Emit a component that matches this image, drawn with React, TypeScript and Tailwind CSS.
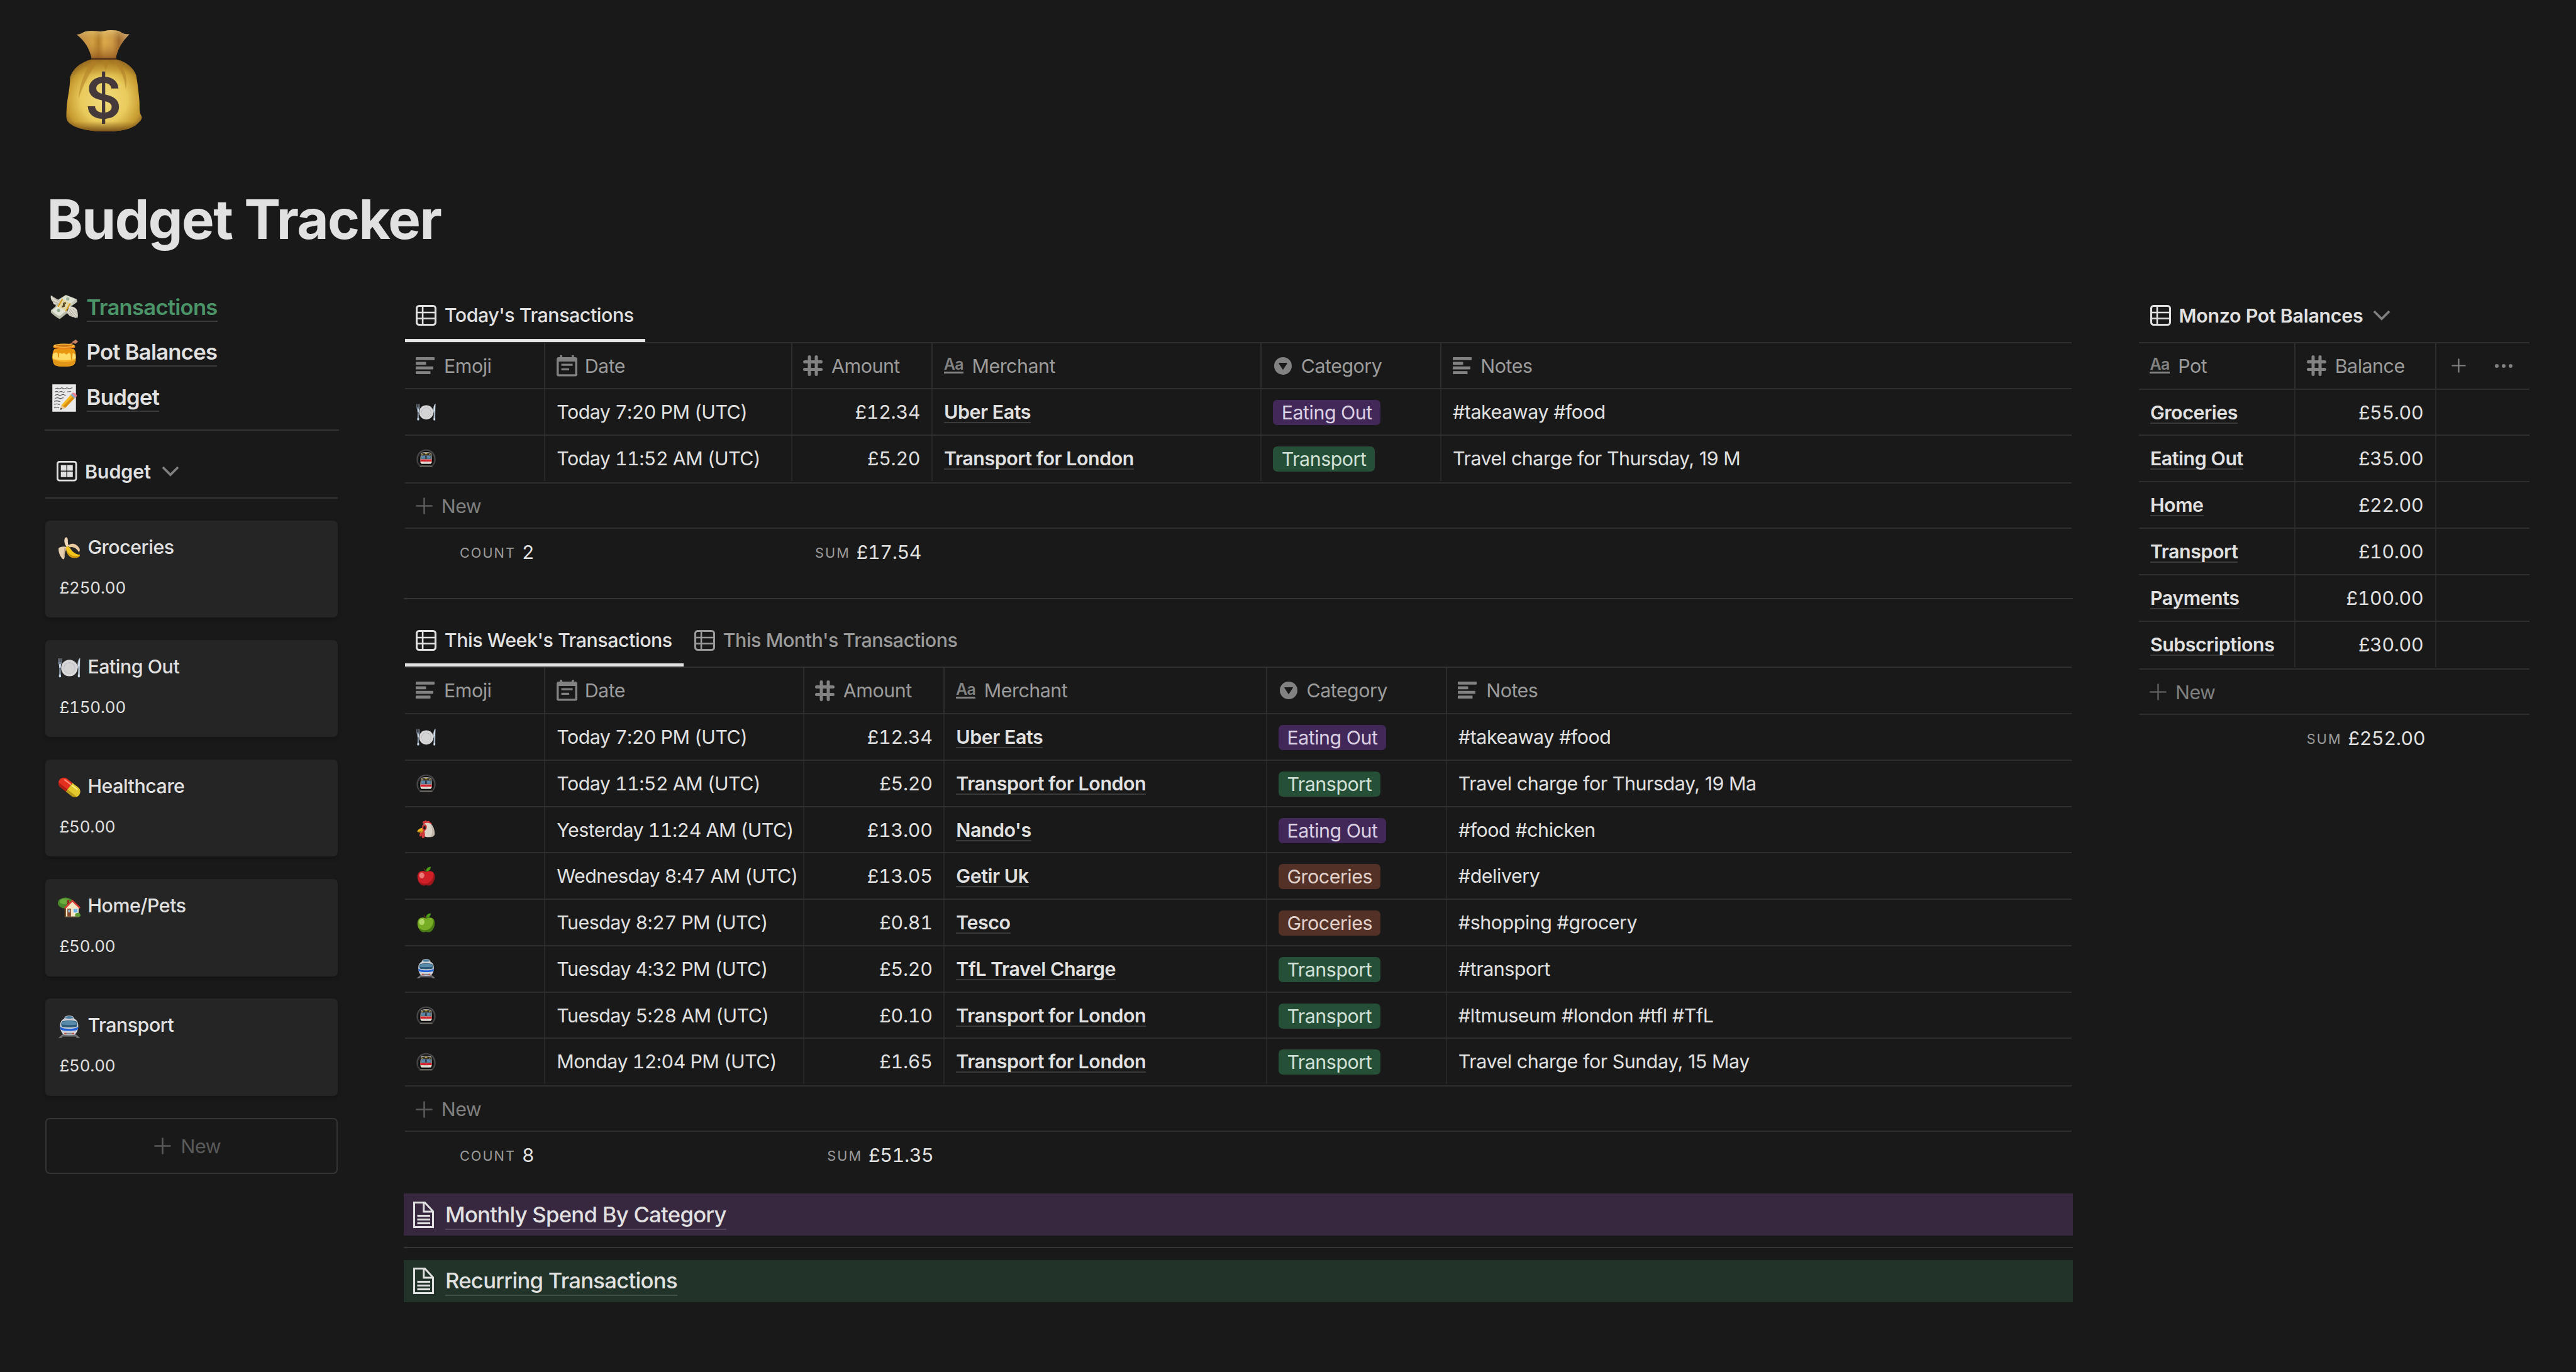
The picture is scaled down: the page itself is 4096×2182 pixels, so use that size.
import type { ReactNode } from "react";

/* ---------- Emoji drawings ---------- */

function MoneyBag() {
  return (
    <svg viewBox="0 0 245 326" className="block h-[161px] w-[121px]">
      <defs>
        <radialGradient id="bagBody" cx="0.5" cy="0.56" r="0.62">
          <stop offset="0" stopColor="#f3dc7c" />
          <stop offset="0.5" stopColor="#e9ca5c" />
          <stop offset="0.8" stopColor="#c69a30" />
          <stop offset="1" stopColor="#7c5520" />
        </radialGradient>
        <linearGradient id="bagShade" x1="0" y1="0" x2="0" y2="1">
          <stop offset="0" stopColor="#a0701f" stopOpacity="0.7" />
          <stop offset="0.22" stopColor="#a0701f" stopOpacity="0" />
          <stop offset="0.86" stopColor="#7a5218" stopOpacity="0" />
          <stop offset="1" stopColor="#6d4616" stopOpacity="0.85" />
        </linearGradient>
        <linearGradient id="bagNeck" x1="0" y1="0" x2="1" y2="0">
          <stop offset="0" stopColor="#b98748" />
          <stop offset="0.3" stopColor="#d3a042" />
          <stop offset="0.42" stopColor="#b4802c" />
          <stop offset="0.52" stopColor="#dcab4c" />
          <stop offset="0.68" stopColor="#cf9a45" />
          <stop offset="0.8" stopColor="#9f6a2c" />
          <stop offset="1" stopColor="#c8a070" />
        </linearGradient>
        <linearGradient id="bagNeckShade" x1="0" y1="0" x2="0" y2="1">
          <stop offset="0" stopColor="#e8d08a" stopOpacity="0.6" />
          <stop offset="0.4" stopColor="#c08a3a" stopOpacity="0" />
          <stop offset="1" stopColor="#8a4f1c" stopOpacity="0.8" />
        </linearGradient>
      </defs>
      <path d="M82 94C45 104 20 126 13 152C13 190 4 216 2 250C1 268-1 284 5 293C20 314 70 326 125 326C180 326 215 318 233 298C243 290 246 283 243 277C234 262 238 250 236 226C233 190 230 172 226 146C218 122 196 102 162 94Z" fill="url(#bagBody)" />
      <path d="M82 94C45 104 20 126 13 152C13 190 4 216 2 250C1 268-1 284 5 293C20 314 70 326 125 326C180 326 215 318 233 298C243 290 246 283 243 277C234 262 238 250 236 226C233 190 230 172 226 146C218 122 196 102 162 94Z" fill="url(#bagShade)" />
      <path d="M84 98C62 130 44 170 40 220C54 180 72 140 104 100ZM116 98L128 130L140 98ZM152 98C180 130 190 160 192 190C200 160 190 120 164 98Z" fill="#b07d26" opacity="0.55" />
      <path d="M34 14C48 14 54 6 64 4C84 0 104 6 124 3C140-2 164 0 173 4C182 12 194 14 204 13C182 36 166 58 160 92H83C76 58 58 32 34 14Z" fill="url(#bagNeck)" />
      <path d="M34 14C48 14 54 6 64 4C84 0 104 6 124 3C140-2 164 0 173 4C182 12 194 14 204 13C182 36 166 58 160 92H83C76 58 58 32 34 14Z" fill="url(#bagNeckShade)" />
      <path d="M82 92H161" stroke="#4b2f17" strokeWidth="4" />
      <text x="120" y="284" textAnchor="middle" fontFamily="Inter, sans-serif" fontWeight="600" fontSize="180" fill="#46393c">
        $
      </text>
    </svg>
  );
}

type EmojiName =
  | "wings" | "honey" | "memo" | "plate" | "metro" | "chicken" | "apple"
  | "greenApple" | "train" | "banana" | "pill" | "house";

const APPLE_BODY = "M50 28C40 22 22 20 12 32C0 48 6 76 22 92C30 100 40 98 50 96C60 98 70 100 78 92C94 76 100 48 88 32C78 20 60 22 50 28Z";

const EMOJI: Record<EmojiName, ReactNode> = {
  wings: (
    <>
      <path d="M48 32L2 4C0 14 4 24 10 28C8 32 14 38 18 38C20 44 28 48 34 46Z" fill="#d8d4c8" />
      <path d="M4 6L44 36M8 24L38 38M16 36L36 42" stroke="#9d998c" strokeWidth="2" fill="none" />
      <path d="M28 20L56 2C68 6 82 12 96 18L97 28L72 46C58 42 42 34 28 26Z" fill="#c6cab8" />
      <path d="M32 20L57 5C68 8 80 13 91 19L70 37C58 34 44 28 32 20Z" fill="#dfe2d2" />
      <circle cx="63" cy="17" r="6" fill="#9fb49a" />
      <path d="M2 58L30 34L62 58L64 66L34 90C22 84 10 74 2 66Z" fill="#b7bba8" />
      <path d="M6 59L30 39L58 59L34 79C24 75 14 68 6 59Z" fill="#e2e4d5" />
      <circle cx="30" cy="58" r="6" fill="#8fa88b" />
      <path d="M42 16L74 34L58 62L26 44Z" fill="#e2d7a0" />
      <path d="M42 16L46 18L30 46L26 44ZM70 32L74 34L58 62L54 60Z" fill="#d99c1c" />
      <path d="M56 34C50 28 44 34 48 38C54 42 50 48 42 42M56 30L42 47" stroke="#4b401f" strokeWidth="3.5" fill="none" />
      <path d="M68 44C80 42 96 48 98 62C100 72 100 82 98 86C94 84 92 84 90 86C86 82 82 84 80 82C76 80 70 80 66 74C62 70 60 68 62 62Z" fill="#dcd8cc" />
      <path d="M72 54L96 84M68 60L86 82M66 66L78 80M82 52L97 72" stroke="#9d998c" strokeWidth="2" />
    </>
  ),
  honey: (
    <>
      <path d="M66 20L88 8" stroke="#b06a48" strokeWidth="5" strokeLinecap="round" />
      <path d="M82 8L92 2L98 8L90 14Z" fill="#c98262" stroke="#c98262" strokeWidth="3" />
      <path d="M16 34C4 46 6 82 16 92C26 100 74 100 84 92C94 82 96 46 84 34Z" fill="#f9b62d" />
      <path d="M16 34C4 46 6 82 16 92C26 100 74 100 84 92C90 88 92 80 93 72C70 84 30 84 8 70Z" fill="#d98b12" opacity="0.75" />
      <path d="M10 46C30 52 70 52 90 46L92 68C70 76 30 76 8 68Z" fill="#ffdb68" />
      <path d="M10 50C10 40 16 34 16 34H84C89 38 91 44 91 50C88 56 84 50 82 47C79 52 81 74 77 74C72 73 77 54 70 47C64 44 63 55 58 54C53 52 52 46 46 49C42 56 38 48 34 46C30 48 34 66 30 66C26 65 29 50 24 46C18 44 14 54 10 50Z" fill="#e8960f" />
      <ellipse cx="50" cy="26" rx="40" ry="10" fill="#e8861a" />
      <ellipse cx="50" cy="22" rx="38" ry="7" fill="#ffc247" />
      <ellipse cx="50" cy="22" rx="30" ry="4.500" fill="#c97412" />
    </>
  ),
  memo: (
    <>
      <path d="M8 1H92V99H8Z" fill="#e9e9ea" />
      <path d="M8 1H92V99H8Z" fill="none" stroke="#c6c6c8" strokeWidth="2" />
      <path d="M18 16L26 14L32 17L42 13L50 17L60 13L68 16L80 13M16 28L24 26L30 29L40 26L48 30L52 27M60 28L74 26M16 40L26 37L34 41L46 37L56 41M16 51L26 49L36 52L48 49M14 62L24 60L36 63M14 73L24 71L34 74M14 85L24 83L32 86" stroke="#4e4e52" strokeWidth="2.500" fill="none" />
      <path d="M36 92L40 76L76 36L90 48L54 86Z" fill="#f6b91c" />
      <path d="M46 80L84 42L90 48L54 86Z" fill="#d98d10" />
      <path d="M36 93L40 76L54 86Z" fill="#e8c79a" />
      <path d="M36 93L38 85L44 89Z" fill="#333" />
      <path d="M73 39L79 33L93 45L87 52Z" fill="#8fa9c4" />
      <path d="M78 33C84 26 100 38 94 46L92 47Z" fill="#ee7f8e" />
    </>
  ),
  plate: (
    <>
      <path d="M1 8V26C1 34 5 36 7 38L5 88C5 94 14 94 14 88L12 38C14 36 18 34 18 26V8H15V26H13V8H11V26H8V8H6V26H4V8Z" fill="#7d8c9c" />
      <path d="M5 34H14L13 50H6ZM5 80H14V91H5Z" fill="#c4d6e8" />
      <path d="M98 6C90 10 86 28 86 50L90 54L88 88C88 94 97 94 97 88Z" fill="#a4b3c0" />
      <path d="M98 8C92 14 89 30 89 46L96 44ZM89 80H97V91H89Z" fill="#d0dde8" />
      <circle cx="51" cy="51" r="36.500" fill="#d9d9da" />
      <circle cx="51" cy="51" r="26" fill="#b9bcc2" />
      <circle cx="51" cy="52" r="23.500" fill="#d4d4d5" />
    </>
  ),
  metro: (
    <>
      <path d="M50 6C22 6 1 28 1 56C1 72 8 86 20 94H80C92 86 99 72 99 56C99 28 78 6 50 6Z" fill="#48484a" />
      <path d="M50 12C26 12 8 32 8 58C8 72 14 84 24 92H76C86 84 92 72 92 58C92 32 74 12 50 12Z" fill="#1b1b1c" />
      <path d="M50 16C32 16 16 32 16 58C16 70 20 80 28 90H72C80 80 84 70 84 58C84 32 68 16 50 16Z" fill="#070707" />
      <path d="M22 88H78L84 94H16Z" fill="#77736d" />
      <path d="M24 24C34 19 66 19 76 24C79 42 80 62 79 72L74 80H26L21 72C20 62 21 42 24 24Z" fill="#d9d7cf" />
      <path d="M27 26C36 22 64 22 73 26L75 36H25Z" fill="#37332a" />
      <path d="M44 25H56V30H44ZM28 30H34V34H28ZM66 30H72V34H66Z" fill="#c9b23c" />
      <path d="M26 36H74L76 56H24Z" fill="#2b3c4c" />
      <path d="M27 38H45V54H26ZM55 38H73L74 54H55Z" fill="#5c87a8" />
      <path d="M21 57H79V68H21Z" fill="#d5202c" />
      <path d="M23 69H36V73H23ZM64 69H77V73H64Z" fill="#f2ecd2" />
      <path d="M50 36V70" stroke="#8b8b8b" strokeWidth="2" />
    </>
  ),
  chicken: (
    <>
      <path d="M34 18C28 12 34 4 40 8C44 0 54 2 54 8C62 2 70 6 68 12C78 12 80 20 78 26L60 30Z" fill="#d6383a" />
      <path d="M30 34C34 18 56 12 70 18C86 26 92 48 94 66C96 82 84 88 66 88C48 90 38 84 36 70Z" fill="#dcd5ca" />
      <path d="M72 20C88 30 92 48 94 66C96 82 84 88 66 88C84 78 86 52 72 20Z" fill="#b6aa9c" opacity="0.7" />
      <path d="M30 32C36 18 54 20 54 36C54 50 42 54 42 60C46 72 46 92 36 94C26 94 28 84 28 78C24 88 14 88 16 76L24 58Z" fill="#cf3a3a" />
      <path d="M4 60C8 48 20 42 30 42L34 60C26 68 14 64 4 60Z" fill="#eab41a" />
      <path d="M4 60C14 58 24 58 33 56L34 61C26 68 14 66 4 60Z" fill="#c18a10" />
      <ellipse cx="42" cy="40" rx="6" ry="9" fill="#1e1a1c" />
    </>
  ),
  apple: (
    <>
      <path d="M50 30C48 22 44 16 38 12" stroke="#6b3b1c" strokeWidth="4" fill="none" />
      <path d={APPLE_BODY} fill="#cf2028" />
      <path d="M50 96C60 98 70 100 78 92C94 76 100 48 88 32C90 60 74 84 50 88C36 90 24 86 14 76C16 82 18 88 22 92C30 100 40 98 50 96Z" fill="#8f1219" opacity="0.7" />
      <ellipse cx="28" cy="46" rx="13" ry="15" fill="#f39a90" opacity="0.75" />
      <path d="M50 26C48 12 60 2 74 2C74 16 64 26 50 26Z" fill="#4b9c14" />
    </>
  ),
  greenApple: (
    <>
      <path d="M50 30C48 22 44 16 38 12" stroke="#6b3b1c" strokeWidth="4" fill="none" />
      <path d={APPLE_BODY} fill="#76ad24" />
      <path d="M50 96C60 98 70 100 78 92C94 76 100 48 88 32C90 60 74 84 50 88C36 90 24 86 14 76C16 82 18 88 22 92C30 100 40 98 50 96Z" fill="#3f6f12" opacity="0.8" />
      <ellipse cx="28" cy="46" rx="14" ry="16" fill="#c0e276" opacity="0.8" />
      <path d="M50 26C48 12 60 2 74 2C74 16 64 26 50 26Z" fill="#4b9c14" />
    </>
  ),
  train: (
    <>
      <path d="M22 82H78L98 99H84L78 94H22L16 99H2Z" fill="#77777b" />
      <path d="M18 90H82V94H18Z" fill="#4c4c50" />
      <path d="M28 14C30 4 38 1 50 1C62 1 70 4 72 14C84 20 90 30 90 46C90 66 82 80 74 84C62 88 38 88 26 84C18 80 10 66 10 46C10 30 16 20 28 14Z" fill="#cfd2d8" />
      <path d="M31 12C33 5 39 3 50 3C61 3 67 5 69 12C60 15 40 15 31 12Z" fill="#4d7fa0" />
      <path d="M20 26C34 21 66 21 80 26C87 32 86 44 82 50C70 54 30 54 18 50C14 44 13 32 20 26Z" fill="#2d5b78" />
      <path d="M21 28C34 24 66 24 79 28C82 32 83 36 82 40C70 43 30 43 18 40C17 36 18 32 21 28Z" fill="#568aa8" />
      <path d="M10 50C20 57 34 59 50 59C66 59 80 57 90 50C90 55 88 60 86 63C76 67 64 68 50 68C36 68 24 67 14 63C12 60 10 55 10 50Z" fill="#1f5fd8" />
      <path d="M32 77H68V84H32Z" fill="#85878d" />
      <path d="M28 77H37V82H28ZM63 77H72V82H63Z" fill="#d0442e" />
    </>
  ),
  banana: (
    <>
      <path d="M40 44C28 34 26 12 32 4C38-2 44 4 44 14C44 26 44 34 50 40Z" fill="#efd9b8" />
      <path d="M46 38C58 24 84 28 96 52C98 60 96 66 92 66C84 52 68 40 52 46Z" fill="#e9c9a0" />
      <path d="M40 44C24 40 8 44 3 50C2 70 12 88 22 98C28 100 30 92 30 84C28 70 32 60 40 52Z" fill="#e6cfae" />
      <path d="M28 48C30 62 22 78 26 92C32 84 28 66 40 52Z" fill="#c7a888" />
      <path d="M36 46C42 38 50 42 56 52C66 68 82 78 98 78C98 88 84 94 66 92C46 88 36 68 36 46Z" fill="#f2c51d" />
      <path d="M40 62C50 80 72 90 98 82C94 92 78 94 66 92C52 88 42 76 40 62Z" fill="#cf930c" />
    </>
  ),
  pill: (
    <>
      <g transform="rotate(38 50 50)">
        <path d="M50 26H20A24 24 0 0 0 20 74H50Z" fill="#e3301f" />
        <path d="M50 26H82A24 24 0 0 1 82 74H50Z" fill="#e3c92c" />
        <path d="M50 62H103A24 24 0 0 1 82 74H50Z" fill="#a98410" opacity="0.7" />
        <path d="M50 62H-1A24 24 0 0 0 20 74H50Z" fill="#98150f" opacity="0.7" />
        <path d="M14 36H46" stroke="#ff8d78" strokeWidth="6" strokeLinecap="round" />
        <path d="M56 36H82" stroke="#fbee84" strokeWidth="6" strokeLinecap="round" />
      </g>
    </>
  ),
  house: (
    <>
      <path d="M30 48H44V92H30Z" fill="#6f4a28" />
      <ellipse cx="34" cy="31" rx="34" ry="24" fill="#4a8a2c" />
      <ellipse cx="30" cy="24" rx="22" ry="12" fill="#6cab3e" />
      <path d="M40 18H50V36H40Z" fill="#8d2a20" />
      <path d="M36 48L64 22L92 48V92H36Z" fill="#f4e5c4" />
      <path d="M28 52L64 16L100 50L96 56L64 26L34 56Z" fill="#d83a34" />
      <path d="M42 56H58V92H42Z" fill="#8c4a2c" />
      <path d="M46 60H54V72H46Z" fill="#86bce0" />
      <path d="M68 56H88V74H68Z" fill="#72b2e4" stroke="#f7f2e4" strokeWidth="2" />
      <ellipse cx="88" cy="84" rx="12" ry="10" fill="#5d9c34" />
      <path d="M32 90H90V94H32Z" fill="#7d6a52" />
    </>
  ),
};

function Emoji({ name, className }: { name: EmojiName; className: string }) {
  return (
    <svg viewBox="0 0 100 100" className={"block shrink-0 overflow-visible " + className}>
      {EMOJI[name]}
    </svg>
  );
}

/* ---------- Interface icons ---------- */

const TableIcon = () => (
  <svg viewBox="0 0 14 14" className="block h-[33px] w-[33px] shrink-0" fill="none" stroke="currentColor">
    <rect x="0.650" y="0.650" width="12.700" height="12.700" rx="1.600" strokeWidth="1.300" />
    <path d="M4.700 1V13M1 5.100H13M1 9.100H13" strokeWidth="1.100" />
  </svg>
);

const GalleryIcon = () => (
  <svg viewBox="0 0 14 14" className="block h-[32.500px] w-[32.500px] shrink-0">
    <rect x="0.600" y="0.600" width="12.800" height="12.800" rx="1.400" fill="none" stroke="currentColor" strokeWidth="1.200" />
    <path d="M2.900 2.900H6.700V6.700H2.900ZM7.300 2.900H11.100V6.700H7.300ZM2.900 7.300H6.700V11.100H2.900ZM7.300 7.300H11.100V11.100H7.300Z" fill="currentColor" />
  </svg>
);

const ChevronIcon = () => (
  <svg viewBox="0 0 30 18" className="block h-[17px] w-[28px] shrink-0 text-[#7f7f7f]" fill="none" stroke="currentColor" strokeWidth="4">
    <path d="M2 2L15 15L28 2" />
  </svg>
);

type PropKind = "text" | "date" | "number" | "title" | "select";

function PropIcon({ kind }: { kind: PropKind }) {
  return (
    <span className="flex w-[31.300px] shrink-0 items-center text-[#828282]">
      {kind === "text" && (
        <svg viewBox="0 0 31 28" className="h-[28px] w-[31px]" fill="currentColor">
          <rect x="0" y="0" width="30" height="4.800" rx="0.800" />
          <rect x="0" y="7.400" width="16.500" height="4.800" rx="0.800" />
          <rect x="0" y="14.800" width="28" height="4.800" rx="0.800" />
          <rect x="0" y="22.200" width="23.500" height="4.800" rx="0.800" />
        </svg>
      )}
      {kind === "date" && (
        <svg viewBox="0 0 33 34" className="h-[34px] w-[33px] shrink-0" fill="currentColor">
          <path fillRule="evenodd" d="M3.500 3H5.500V0H9V3H24V0H27.500V3H29.500A3.500 3.500 0 0 1 33 6.500V30.500A3 3 0 0 1 30 33.500H3A3 3 0 0 1 0 30.500V6.500A3.500 3.500 0 0 1 3.500 3ZM3.500 10V30.300H29.500V10Z" />
          <path d="M7.500 13.500H25.500V16.800H7.500ZM7.500 20.800H20V24H7.500Z" />
        </svg>
      )}
      {kind === "number" && (
        <svg viewBox="0 0 31 33" className="h-[33px] w-[31px]" fill="none" stroke="currentColor" strokeWidth="5" strokeLinecap="round">
          <path d="M10 2.500V30.500M21 2.500V30.500M2.500 10.500H28.500M2.500 22.500H28.500" />
        </svg>
      )}
      {kind === "title" && (
        <span className="flex h-[27px] w-[31.300px] -translate-y-[1px] flex-col items-center justify-between border-b-[3px] border-[#828282] text-[25px] leading-[24px] font-semibold tracking-[-0.03em]">
          Aa
        </span>
      )}
      {kind === "select" && (
        <svg viewBox="0 0 28 28" className="ml-[2px] h-[28px] w-[28px]">
          <circle cx="14" cy="14" r="14" fill="currentColor" />
          <path d="M7.500 9.500H20.500L14 19.500Z" fill="#191919" stroke="#191919" strokeWidth="1" strokeLinejoin="round" />
        </svg>
      )}
    </span>
  );
}

const PlusIcon = ({ className }: { className: string }) => (
  <svg viewBox="0 0 27 27" className={"block shrink-0 " + className} fill="none" stroke="currentColor" strokeWidth="2.600" strokeLinecap="round">
    <path d="M13.500 1.500V25.500M1.500 13.500H25.500" />
  </svg>
);

const PageIcon = () => (
  <svg viewBox="0 0 33 42" className="block h-[42px] w-[33px] shrink-0" fill="none" stroke="currentColor" strokeWidth="3">
    <path d="M1.500 1.500H18.500L31.500 15.500V40.500H1.500ZM16.800 1.500V16H31.500" />
    <path d="M6.500 22.500H27M6.500 28.500H27M6.500 34.500H27" />
  </svg>
);

/* ---------- Shared table parts ---------- */

const CELL = "flex h-full min-w-0 items-center px-[17.900px]";

function HeaderCell({ kind, label, last }: { kind: PropKind; label: string; last?: boolean }) {
  return (
    <div className={CELL + " gap-[13.500px] pl-[17.500px]! text-[#9b9b9b] " + (last ? "" : "border-r-2 border-[#2d2d2d]")}>
      <PropIcon kind={kind} />
      <span>{label}</span>
    </div>
  );
}

const LinkText = ({ children }: { children: ReactNode }) => (
  <span className="border-y-2 border-t-transparent border-b-[#3a3a3a] font-[560] leading-[32px] tracking-[-0.015em] whitespace-nowrap">
    {children}
  </span>
);

const NewRow = () => (
  <div className="flex h-[74px] items-center gap-[14px] border-y-2 border-[#2f2f2f] pt-[2px] pl-[17px] text-[#7f7f7f]">
    <PlusIcon className="h-[27px] w-[27px] text-[#5a5a5a]" />
    <span>New</span>
  </div>
);

function Aggregate({ label, value }: { label: string; value: string }) {
  return (
    <div className="flex items-center justify-end gap-[10px] pr-[18px]">
      <span className="translate-y-[1px] text-[21.700px] tracking-[0.094em] text-[#9b9b9b]">{label}</span>
      <span className="tracking-[-0.012em] tabular-nums">{value}</span>
    </div>
  );
}

const ROW_CELL = CELL + " border-r-2 border-[#272727]";

/* ---------- Transactions ---------- */

type Category = "Eating Out" | "Transport" | "Groceries";

const TAG: Record<Category, string> = {
  "Eating Out": "bg-[#412859] text-[#dcd1e4]",
  Transport: "bg-[#264f37] text-[#d2e1d8]",
  Groceries: "bg-[#543127] text-[#e1d2cc]",
};

interface Transaction {
  icon: EmojiName;
  date: string;
  amount: string;
  merchant: string;
  category: Category;
  notes: string;
}

const TODAY: Transaction[] = [
  { icon: "plate", date: "Today 7:20 PM (UTC)", amount: "£12.34", merchant: "Uber Eats", category: "Eating Out", notes: "#takeaway #food" },
  { icon: "metro", date: "Today 11:52 AM (UTC)", amount: "£5.20", merchant: "Transport for London", category: "Transport", notes: "Travel charge for Thursday, 19 M" },
];

const WEEK: Transaction[] = [
  { icon: "plate", date: "Today 7:20 PM (UTC)", amount: "£12.34", merchant: "Uber Eats", category: "Eating Out", notes: "#takeaway #food" },
  { icon: "metro", date: "Today 11:52 AM (UTC)", amount: "£5.20", merchant: "Transport for London", category: "Transport", notes: "Travel charge for Thursday, 19 Ma" },
  { icon: "chicken", date: "Yesterday 11:24 AM (UTC)", amount: "£13.00", merchant: "Nando's", category: "Eating Out", notes: "#food #chicken" },
  { icon: "apple", date: "Wednesday 8:47 AM (UTC)", amount: "£13.05", merchant: "Getir Uk", category: "Groceries", notes: "#delivery" },
  { icon: "greenApple", date: "Tuesday 8:27 PM (UTC)", amount: "£0.81", merchant: "Tesco", category: "Groceries", notes: "#shopping #grocery" },
  { icon: "train", date: "Tuesday 4:32 PM (UTC)", amount: "£5.20", merchant: "TfL Travel Charge", category: "Transport", notes: "#transport" },
  { icon: "metro", date: "Tuesday 5:28 AM (UTC)", amount: "£0.10", merchant: "Transport for London", category: "Transport", notes: "#ltmuseum #london #tfl #TfL" },
  { icon: "metro", date: "Monday 12:04 PM (UTC)", amount: "£1.65", merchant: "Transport for London", category: "Transport", notes: "Travel charge for Sunday, 15 May" },
];

const TODAY_COLS = "grid grid-cols-[223.6px_392.4px_223.4px_523.3px_285.6px_1fr]";
const WEEK_COLS = "grid grid-cols-[223.6px_411.2px_223.9px_512.7px_285.8px_1fr]";

function TransactionTable({ rows, cols, count, sum }: { rows: Transaction[]; cols: string; count: string; sum: string }) {
  return (
    <div className="border-t-2 border-[#2f2f2f]">
      <div className={cols + " h-[73.700px] border-b-2 border-[#2f2f2f]"}>
        <HeaderCell kind="text" label="Emoji" />
        <HeaderCell kind="date" label="Date" />
        <HeaderCell kind="number" label="Amount" />
        <HeaderCell kind="title" label="Merchant" />
        <HeaderCell kind="select" label="Category" />
        <HeaderCell kind="text" label="Notes" last />
      </div>
      {rows.map((r, i) => (
        <div key={i} className={cols + " h-[73.750px] border-b-2 " + (i === rows.length - 1 ? "border-transparent" : "border-[#2f2f2f]")}>
          <div className={ROW_CELL}>
            <Emoji name={r.icon} className="h-[31px] w-[31px]" />
          </div>
          <div className={ROW_CELL + " tracking-[-0.018em] whitespace-nowrap tabular-nums"}>{r.date}</div>
          <div className={ROW_CELL + " justify-end tracking-[-0.01em] tabular-nums"}>{r.amount}</div>
          <div className={ROW_CELL}>
            <LinkText>{r.merchant}</LinkText>
          </div>
          <div className={ROW_CELL}>
            <span className={"mt-[2px] flex h-[40px] items-center rounded-[6.700px] px-[13.400px] " + TAG[r.category]}>{r.category}</span>
          </div>
          <div className={CELL}>
            <span className="w-[474px] overflow-hidden tracking-[-0.0145em] whitespace-nowrap">{r.notes}</span>
          </div>
        </div>
      ))}
      <NewRow />
      <div className={cols + " h-[74px]"}>
        <Aggregate label="COUNT" value={count} />
        <div />
        <Aggregate label="SUM" value={sum} />
      </div>
    </div>
  );
}

function Tab({ label, active }: { label: string; active?: boolean }) {
  return (
    <div className={"flex flex-col " + (active ? "text-[#e1e1e1]" : "text-[#9b9b9b]")}>
      <div className="flex h-[73.600px] items-center gap-[13px] pr-[18px] pb-[1px] pl-[17px]">
        <TableIcon />
        <span className="font-[550] tracking-[-0.0155em]">{label}</span>
      </div>
      <div className={"h-[5px] " + (active ? "bg-[#e1e1e1]" : "")} />
    </div>
  );
}

function PageBar({ label, tone, line }: { label: string; tone: string; line: string }) {
  return (
    <div className={"flex h-[67px] items-center gap-[18px] pl-[15px] text-[34.700px] " + tone}>
      <PageIcon />
      <span className={"-mt-[2px] border-y-2 border-t-transparent leading-[46px] font-[550] tracking-[-0.0215em] " + line}>{label}</span>
    </div>
  );
}

/* ---------- Sidebar ---------- */

const LINKS: { icon: EmojiName; label: string; color: string }[] = [
  { icon: "wings", label: "Transactions", color: "text-[#4a9468]" },
  { icon: "honey", label: "Pot Balances", color: "" },
  { icon: "memo", label: "Budget", color: "" },
];

const BUDGETS: { icon: EmojiName; label: string; amount: string }[] = [
  { icon: "banana", label: "Groceries", amount: "£250.00" },
  { icon: "plate", label: "Eating Out", amount: "£150.00" },
  { icon: "pill", label: "Healthcare", amount: "£50.00" },
  { icon: "house", label: "Home/Pets", amount: "£50.00" },
  { icon: "train", label: "Transport", amount: "£50.00" },
];

function Sidebar() {
  return (
    <aside className="mr-[103px] w-[468.400px] shrink-0">
      <div className="pt-[51.500px] pl-[9.500px]">
        {LINKS.map((l) => (
          <div key={l.label} className="flex h-[71.350px] items-center gap-[13.500px] text-[34.700px]">
            <Emoji name={l.icon} className="mt-[5px] h-[44px] w-[44px]" />
            <span className={"border-y-2 border-t-transparent border-b-[#3a3a3a] leading-[44px] font-[560] tracking-[-0.0225em] " + l.color}>
              {l.label}
            </span>
          </div>
        ))}
      </div>
      <div className="mt-[16.800px] h-[2px] bg-[#353535]" />
      <div className="mx-[1.800px]">
        <div className="mt-[23px] flex h-[85px] items-center border-b-2 border-[#353535] pl-[18px]">
          <GalleryIcon />
          <span className="ml-[12px] font-semibold tracking-[-0.002em]">Budget</span>
          <span className="ml-[17px]">
            <ChevronIcon />
          </span>
        </div>
        <div className="mt-[34.500px] flex flex-col gap-[35.700px]">
          {BUDGETS.map((b) => (
            <div key={b.label} className="h-[154.500px] rounded-[7px] bg-[#252525] px-[20px] pt-[20px] shadow-[0_3px_6px_rgba(0,0,0,0.2)]">
              <div className="flex h-[44px] items-center gap-[11px]">
                <Emoji name={b.icon} className="mt-[5px] h-[36px] w-[36px]" />
                <span className="font-[550] tracking-[-0.016em]">{b.label}</span>
              </div>
              <div className="mt-[27px] pl-[2px] text-[26px] leading-[32px] tracking-[-0.008em] tabular-nums">{b.amount}</div>
            </div>
          ))}
          <div className="flex h-[89px] items-center justify-center gap-[16px] rounded-[7px] border-2 border-[#353535] pr-[14px] text-[#5a5a5a]">
            <PlusIcon className="h-[27px] w-[27px]" />
            <span>New</span>
          </div>
        </div>
      </div>
    </aside>
  );
}

/* ---------- Pot balances ---------- */

const POTS: [string, string][] = [
  ["Groceries", "£55.00"],
  ["Eating Out", "£35.00"],
  ["Home", "£22.00"],
  ["Transport", "£10.00"],
  ["Payments", "£100.00"],
  ["Subscriptions", "£30.00"],
];

const POT_COLS = "grid grid-cols-[249.4px_223.9px_1fr]";

function PotBalances() {
  return (
    <section className="mt-[64.400px] w-[621px] shrink-0">
      <div className="flex h-[78.600px] items-center pb-[5px] pl-[18.500px]">
        <TableIcon />
        <span className="ml-[12px] font-semibold tracking-[-0.0095em]">Monzo Pot Balances</span>
        <span className="ml-[16px]">
          <ChevronIcon />
        </span>
      </div>
      <div className="border-t-2 border-[#2f2f2f]">
        <div className={POT_COLS + " h-[73.900px] border-b-2 border-[#2f2f2f]"}>
          <HeaderCell kind="title" label="Pot" />
          <HeaderCell kind="number" label="Balance" />
          <div className="flex items-center pl-[24px]">
            <PlusIcon className="h-[23px] w-[23px] text-[#828282]" />
            <svg viewBox="0 0 28 6" className="ml-[46px] h-[6px] w-[28px]" fill="#828282">
              <circle cx="3" cy="3" r="3" />
              <circle cx="14" cy="3" r="3" />
              <circle cx="25" cy="3" r="3" />
            </svg>
          </div>
        </div>
        {POTS.map(([name, balance], i) => (
          <div key={name} className={POT_COLS + " h-[73.900px] border-b-2 " + (i === POTS.length - 1 ? "border-transparent" : "border-[#2f2f2f]")}>
            <div className={ROW_CELL}>
              <LinkText>{name}</LinkText>
            </div>
            <div className={ROW_CELL + " justify-end pr-[19px]! tracking-[-0.012em] tabular-nums"}>{balance}</div>
          </div>
        ))}
        <NewRow />
        <div className={POT_COLS + " h-[74px]"}>
          <div />
          <Aggregate label="SUM" value="£252.00" />
        </div>
      </div>
    </section>
  );
}

/* ---------- Page ---------- */

export default function App() {
  return (
    <div className="h-[2182px] w-[4096px] overflow-hidden bg-[#191919] font-['Inter',sans-serif] text-[30.400px] leading-[40px] tracking-[-0.016em] text-[#e1e1e1]">
      <header className="pt-[48px]">
        <div className="pl-[104.700px]">
          <MoneyBag />
        </div>
        <h1 className="mt-[87.700px] pl-[74.500px] text-[86.800px] leading-[104px] font-bold tracking-[-0.0185em]">Budget Tracker</h1>
      </header>
      <div className="flex items-start pl-[70.600px]">
        <Sidebar />
        <main className="mr-[105px] w-[2654px] shrink-0 pt-[64.400px]">
          <div className="mx-[1.800px]">
            <div className="flex">
              <Tab label="Today's Transactions" active />
            </div>
            <TransactionTable rows={TODAY} cols={TODAY_COLS} count="2" sum="£17.54" />
          </div>
          <div className="mt-[36px] h-[2px] bg-[#353535]" />
          <div className="mx-[1.800px] mt-[29px]">
            <div className="flex">
              <Tab label="This Week's Transactions" active />
              <Tab label="This Month's Transactions" />
            </div>
            <TransactionTable rows={WEEK} cols={WEEK_COLS} count="8" sum="£51.35" />
          </div>
          <div className="mt-[24px]">
            <PageBar label="Monthly Spend By Category" tone="bg-[#372840]" line="border-b-[#54455d]" />
            <div className="mt-[17.500px] mb-[19px] h-[2px] bg-[#353535]" />
            <PageBar label="Recurring Transactions" tone="bg-[#223429]" line="border-b-[#425148]" />
          </div>
        </main>
        <PotBalances />
      </div>
    </div>
  );
}
